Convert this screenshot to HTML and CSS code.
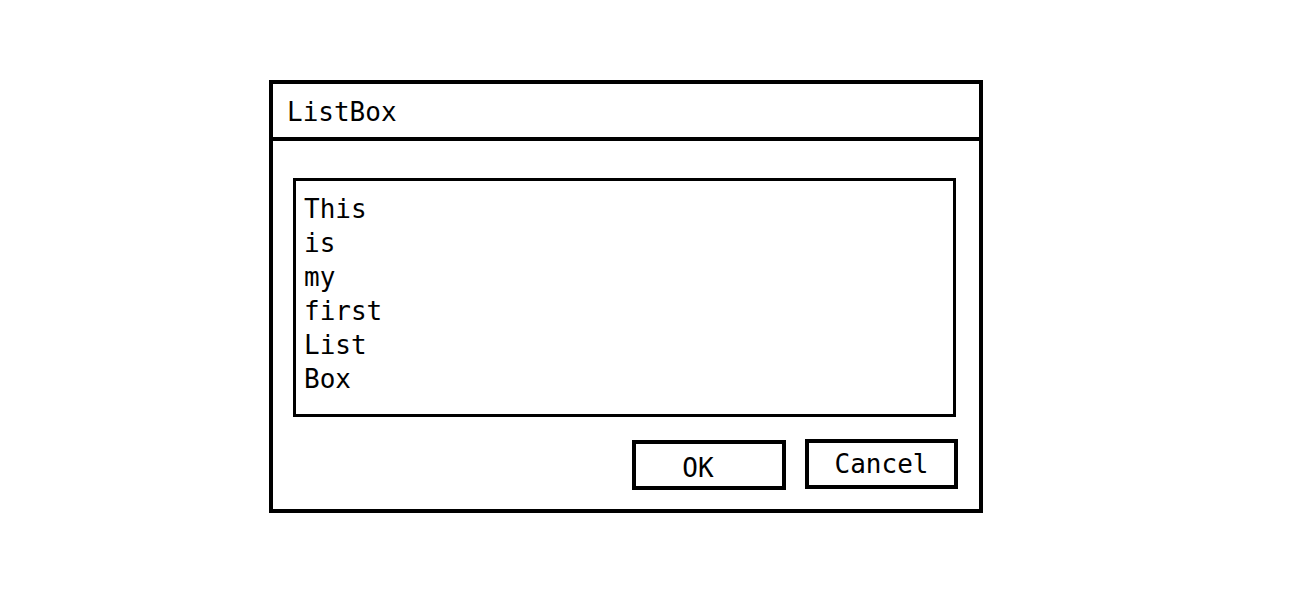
FILE: index.html
```html
<!DOCTYPE html>
<html>
<head>
<meta charset="utf-8">
<link rel="stylesheet" href="styles.css">
</head>
<body>
<div class="dialog">
  <div class="title">ListBox</div>
  <div class="content">
    <ul class="listbox">
      <li>This</li>
      <li>is</li>
      <li>my</li>
      <li>first</li>
      <li>List</li>
      <li>Box</li>
    </ul>
    <div class="buttons">
      <div class="btn btn-ok">OK</div>
      <div class="btn btn-cancel">Cancel</div>
    </div>
  </div>
</div>
</body>
</html>
```
FILE: styles.css
```css
html, body {
  margin: 0;
  padding: 0;
  background: #ffffff;
}
body {
  font-family: "DejaVu Sans Mono", "Liberation Mono", monospace;
  font-size: 26px;
  color: #000;
  padding-top: 80px;
  padding-left: 269px;
}
.dialog {
  width: 706px;
  height: 425px;
  border: 4px solid #000;
  display: flex;
  flex-direction: column;
}
.title {
  height: 51px;
  padding-top: 2px;
  line-height: 53px;
  padding-left: 14px;
  border-bottom: 4px solid #000;
}
.content {
  padding: 37px 23px 0 20px;
  display: flex;
  flex-direction: column;
}
.listbox {
  list-style: none;
  margin: 0;
  padding: 11px 8px 0 8px;
  height: 222px;
  border: 3px solid #000;
  line-height: 34px;
}
.listbox li {
  margin: 0;
  padding: 0;
}
.buttons {
  display: flex;
  justify-content: flex-end;
  align-items: flex-start;
  gap: 19px;
  margin-top: 22px;
  margin-right: -2px;
}
.btn {
  box-sizing: border-box;
  height: 50px;
  border: 4px solid #000;
  display: flex;
  justify-content: center;
  line-height: 42px;
}
.btn-ok {
  width: 154px;
  margin-top: 1px;
  padding-right: 22px;
  padding-top: 3px;
}
.btn-cancel {
  width: 153px;
  padding-top: 1px;
  line-height: 40px;
}
```
